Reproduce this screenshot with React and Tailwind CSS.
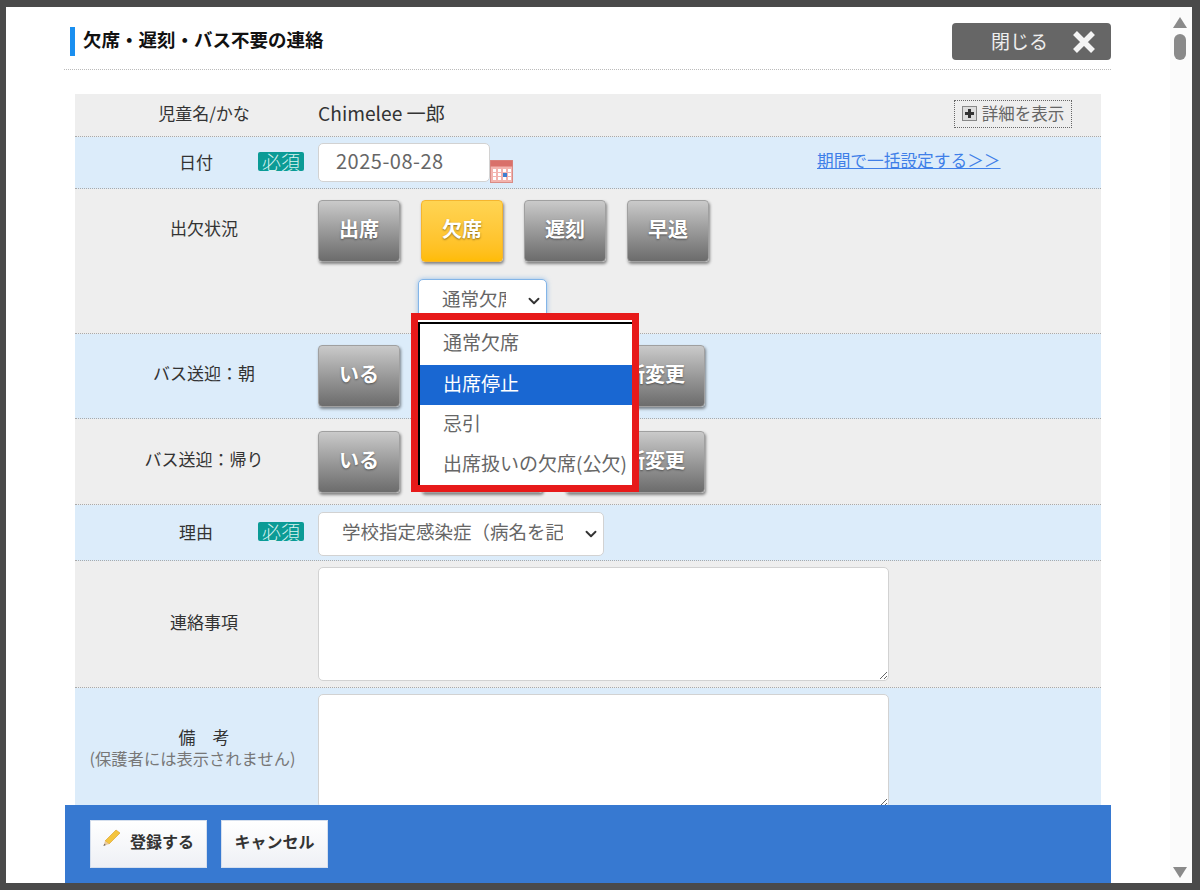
import { ChevronDown } from "lucide-react";

const Btn = ({ children, active, className = "w-[82px]" }) => (
  <button
    type="button"
    className={`${className} h-[62px] rounded-[4px] border pb-[5px] text-[20px] font-bold text-white shadow-[1px_2px_3px_rgba(0,0,0,0.45)] [text-shadow:0_1px_2px_rgba(0,0,0,0.45)] ${
      active
        ? "border-[#f5b52e] bg-gradient-to-b from-[#ffd452] to-[#ffbc05]"
        : "border-[#a0a0a0] bg-gradient-to-b from-[#cacaca] to-[#6c6c6c]"
    }`}
  >
    {children}
  </button>
);

const Badge = () => (
  <span className="flex h-[19px] w-[46px] items-center justify-center rounded-[2px] bg-[#0b9b96] text-[19px] leading-none font-light text-[#d8f2f0]">
    必須
  </span>
);

const Label = ({ children, className = "" }) => (
  <div className={`w-[243px] shrink-0 pl-[15px] text-center text-[17px] text-[#333] ${className}`}>{children}</div>
);

const BadgeLabel = ({ children }) => (
  <div className="flex w-[243px] shrink-0 items-center pb-[2px] pl-[104px] text-[17px] text-[#333]">
    <span className="w-[79px]">{children}</span>
    <Badge />
  </div>
);

const Select = ({ children, className, focused }) => (
  <div className={`relative ${className}`}>
    <select
      className={`h-full w-full appearance-none rounded-[5px] border bg-white pr-[40px] pb-[3px] pl-[23px] text-[18.5px] text-[#666] outline-none ${
        focused ? "border-[#83b5e8] shadow-[0_0_5px_rgba(90,160,230,0.6)]" : "border-[#d2d2d2]"
      }`}
    >
      {children}
    </select>
    <ChevronDown strokeWidth={2.5} className="pointer-events-none absolute top-1/2 right-[4px] h-[18px] w-[18px] -translate-y-1/2 text-[#333]" />
  </div>
);

const Calendar = () => (
  <svg width="23" height="23" viewBox="0 0 23 23" className="mt-[17px] shrink-0">
    <rect x="0.5" y="0.5" width="22" height="22" fill="#f3b3ae" stroke="#d98c86" />
    <rect x="0.5" y="0.5" width="22" height="6" fill="#d9706a" />
    {[3, 8, 13, 18].map((x) =>
      [9, 13, 17].map((y) => <rect key={`${x}-${y}`} x={x} y={y} width="3" height="3" fill="#fff" />)
    )}
    <rect x="13" y="13" width="4" height="4" fill="#3f7fd0" />
  </svg>
);

const Pencil = () => (
  <svg width="20" height="20" viewBox="0 0 20 20" className="mb-[5px]">
    <path d="M14 2 L18 5 L7 16 L3 13 Z" fill="#f4c43e" stroke="#d99a20" strokeWidth="0.6" />
    <path d="M3 13 L7 16 L1.5 18 Z" fill="#e8c9a0" />
    <path d="M1.5 18 L2.2 15.8 L3.8 17 Z" fill="#666" />
  </svg>
);

const Scrollbar = () => (
  <div className="relative w-[22px] shrink-0 bg-[#fbfbfb]">
    <svg width="14" height="11" viewBox="0 0 14 11" className="mt-[10px] ml-[3px]">
      <polygon points="7,0 14,11 0,11" fill="#8a8a8a" />
    </svg>
    <div className="mt-[6px] ml-[4px] h-[26px] w-[12px] rounded-[6px] bg-[#8a8a8a]" />
    <svg width="14" height="11" viewBox="0 0 14 11" className="absolute bottom-[5px] left-[3px]">
      <polygon points="0,0 14,0 7,11" fill="#8a8a8a" />
    </svg>
  </div>
);

export default function App() {
  return (
    <div className="h-[890px] w-[1200px] overflow-hidden bg-[#4a4a4a] pt-[7px] pr-[8px] pb-[7px] pl-[6px] font-['Noto_Sans_CJK_JP','Noto_Sans',sans-serif]">
      <div className="relative flex h-full bg-white">
        <div className="min-w-0 flex-1 overflow-hidden">
          {/* header */}
          <div className="mt-[16px] ml-[58px] flex h-[47px] w-[1047px] items-start justify-between border-b border-dotted border-[#bbb]">
            <div className="mt-[4px] ml-[6px] flex h-[29px] items-center border-l-[5px] border-[#1a8ff0] pl-[8px]">
              <span className="pb-[3px] text-[18.5px] font-bold text-[#111]">欠席・遅刻・バス不要の連絡</span>
            </div>
            <button type="button" className="flex h-[37px] w-[159px] items-center rounded-[4px] bg-[#666] pl-[39px] text-[19px] text-[#eee]">
              <span>閉じる</span>
              <svg width="24" height="22" viewBox="0 0 24 22" className="ml-[24px]">
                <path d="M3 2 L21 20 M21 2 L3 20" stroke="#f4f4f4" strokeWidth="5.5" />
              </svg>
            </button>
          </div>

          {/* form */}
          <div className="mt-[24px] ml-[69px] w-[1026px]">
            <div className="flex h-[43px] items-center border-b border-dotted border-[#aaa] bg-[#eeeeee]">
              <Label className="pb-[4px]">児童名/かな</Label>
              <div className="pb-[4px] text-[19.2px] text-[#333]">Chimelee 一郎</div>
              <button type="button" className="mr-[29px] mb-[2px] ml-auto flex h-[28px] w-[118px] items-center justify-center gap-[5px] border border-dotted border-[#666] pb-[1px] text-[16.5px] text-[#666]">
                <span className="flex h-[15px] w-[15px] shrink-0 items-center justify-center border border-[#888] bg-[#ddd]">
                  <svg width="11" height="11" viewBox="0 0 11 11">
                    <path d="M5.5 1 V10 M1 5.5 H10" stroke="#333" strokeWidth="3" />
                  </svg>
                </span>
                詳細を表示
              </button>
            </div>

            <div className="flex h-[52px] border-b border-dotted border-[#aaa] bg-[#dcecfa]">
              <BadgeLabel>日付</BadgeLabel>
              <div className="flex pt-[6px]">
                <input
                  type="text"
                  defaultValue="2025-08-28"
                  className="h-[39px] w-[172px] rounded-[5px] border border-[#d2d2d2] bg-white px-[17px] pb-[4px] text-[20px] tracking-[0.5px] text-[#666] outline-none"
                />
                <Calendar />
              </div>
              <a href="#" className="mt-[11px] ml-[304px] text-[16.7px] leading-[25px] text-[#3f7fe8] underline">
                期間で一括設定する＞＞
              </a>
            </div>

            <div className="flex h-[145px] border-b border-dotted border-[#aaa] bg-[#eeeeee] pt-[11px]">
              <div className="flex h-[56px] items-center">
                <Label>出欠状況</Label>
              </div>
              <div>
                <div className="flex gap-[21px]">
                  <Btn>出席</Btn>
                  <Btn active>欠席</Btn>
                  <Btn>遅刻</Btn>
                  <Btn>早退</Btn>
                </div>
                <Select focused className="mt-[17px] ml-[100px] h-[43px] w-[129px]">
                  <option>通常欠席</option>
                </Select>
              </div>
            </div>

            <div className="flex h-[85px] items-start border-b border-dotted border-[#aaa] bg-[#dcecfa] pt-[11px]">
              <div className="flex h-[56px] items-center">
                <Label>バス送迎：朝</Label>
              </div>
              <div className="flex gap-[21px]">
                <Btn>いる</Btn>
                <Btn className="w-[122px]">いない</Btn>
                <Btn className="ml-px w-[140px]">送迎所変更</Btn>
              </div>
            </div>

            <div className="flex h-[86px] items-start border-b border-dotted border-[#aaa] bg-[#eeeeee] pt-[12px]">
              <div className="flex h-[56px] items-center">
                <Label>バス送迎：帰り</Label>
              </div>
              <div className="flex gap-[21px]">
                <Btn>いる</Btn>
                <Btn className="w-[122px]">いない</Btn>
                <Btn className="ml-px w-[140px]">送迎所変更</Btn>
              </div>
            </div>

            <div className="flex h-[56px] items-center border-b border-dotted border-[#aaa] bg-[#dcecfa]">
              <BadgeLabel>理由</BadgeLabel>
              <Select className="mt-[2px] h-[44px] w-[286px]">
                <option>学校指定感染症（病名を記入）</option>
              </Select>
            </div>

            <div className="flex h-[127px] items-center border-b border-dotted border-[#aaa] bg-[#eeeeee]">
              <Label className="pb-[4px]">連絡事項</Label>
              <textarea className="h-[114px] w-[571px] rounded-[5px] border border-[#d2d2d2] bg-white outline-none" />
            </div>

            <div className="flex h-[140px] items-start bg-[#dcecfa] pt-[6px]">
              <div className="flex h-[114px] items-center pb-[8px]">
                <div className="w-[243px] text-center">
                  <div className="pl-[15px] text-[17px] leading-[22px] text-[#333]">備　考</div>
                  <div className="pr-[8px] text-[16.3px] leading-[20px] whitespace-nowrap text-[#777]">(保護者には表示されません)</div>
                </div>
              </div>
              <textarea className="h-[114px] w-[571px] rounded-[5px] border border-[#d2d2d2] bg-white outline-none" />
            </div>
          </div>
        </div>
        <Scrollbar />

        {/* open dropdown */}
        <div className="absolute top-[306px] left-[405px] w-[228px] border-[7px] border-[#e71a1a] bg-white pt-[2px] text-[19px] text-[#666]">
          <div className="border-t-2 border-l-2 border-black">
            <div className="flex h-[41px] items-center pb-[4px] pl-[23px]">通常欠席</div>
            <div className="flex h-[40px] items-center bg-[#1967d2] pb-[4px] pl-[23px] text-white">出席停止</div>
            <div className="flex h-[40px] items-center pb-[4px] pl-[23px]">忌引</div>
            <div className="flex h-[40px] items-center pb-[4px] pl-[23px] whitespace-nowrap">出席扱いの欠席(公欠)</div>
          </div>
        </div>

        {/* footer */}
        <div className="absolute bottom-0 left-[59px] flex h-[78px] w-[1046px] items-center gap-[14px] bg-[#3779d1] pl-[25px]">
          <button type="button" className="flex h-[48px] w-[117px] items-center gap-[8px] border border-[#d5dfee] bg-gradient-to-b from-white to-[#eef0f5] pb-[7px] pl-[11px] text-[16px] font-bold text-[#333]">
            <Pencil />
            登録する
          </button>
          <button type="button" className="h-[48px] w-[107px] border border-[#d5dfee] bg-gradient-to-b from-white to-[#eef0f5] pb-[7px] text-[16px] font-bold text-[#333]">
            キャンセル
          </button>
        </div>
      </div>
    </div>
  );
}
